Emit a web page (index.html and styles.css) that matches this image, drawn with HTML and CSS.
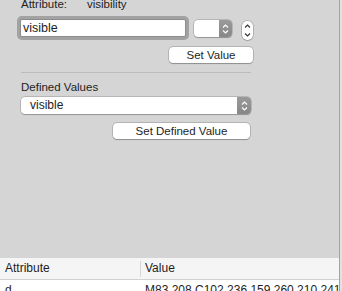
FILE: index.html
```html
<!DOCTYPE html>
<html lang="en">
<head>
    <meta charset="UTF-8">
    <meta name="viewport" content="width=device-width, initial-scale=1.0">
    <title>Attribute Inspector</title>
    <link rel="stylesheet" href="styles.css">
</head>
<body>
    <div class="window">
        <div class="inspector">
            <div class="attr-row">
                <span class="attr-label">Attribute:</span>
                <span class="attr-name">visibility</span>
            </div>

            <div class="value-row">
                <div class="text-field">visible</div>
                <div class="popup popup-small">
                    <span class="popup-value"></span>
                    <span class="popup-arrow">
                        <svg width="7" height="10" viewBox="0 0 7 10"><path d="M1 3.5 L3.5 1 L6 3.5 M1 6.5 L3.5 9 L6 6.5" fill="none" stroke="#fff" stroke-width="1.2"/></svg>
                    </span>
                </div>
                <div class="stepper">
                    <svg width="7" height="15" viewBox="0 0 7 15"><path d="M1 4.5 L3.5 2 L6 4.5 M1 10.5 L3.5 13 L6 10.5" fill="none" stroke="#333" stroke-width="1.1"/></svg>
                </div>
            </div>

            <div class="button-row set-value-row">
                <button class="push-button set-value">Set Value</button>
            </div>

            <div class="separator"></div>

            <div class="section-label">Defined Values</div>
            <div class="popup popup-wide">
                <span class="popup-value">visible</span>
                <span class="popup-arrow">
                    <svg width="7" height="10" viewBox="0 0 7 10"><path d="M1 3.5 L3.5 1 L6 3.5 M1 6.5 L3.5 9 L6 6.5" fill="none" stroke="#fff" stroke-width="1.2"/></svg>
                </span>
            </div>

            <div class="button-row set-defined-row">
                <button class="push-button set-defined">Set Defined Value</button>
            </div>
        </div>

        <div class="table-area">
            <table class="attr-table">
                <thead>
                    <tr>
                        <th class="col-attr">Attribute</th>
                        <th class="col-value">Value</th>
                    </tr>
                </thead>
                <tbody>
                    <tr>
                        <td class="col-attr">d</td>
                        <td class="col-value">M83 208 C102 236 159 260 210 241 C255 224 271 180</td>
                    </tr>
                </tbody>
            </table>
        </div>
    </div>
</body>
</html>
```

FILE: styles.css
```css
html {
    background: #e2e2e2;
}

body {
    margin: 0;
    padding: 0;
    font-family: 'Liberation Sans', Arial, sans-serif;
    font-size: 11.5px;
    color: #1e1e1e;
    overflow: hidden;
}

.window {
    width: 339px;
    height: 291px;
    background: #d5d5d5;
    border-right: 1px solid #a3a3a3;
    display: flex;
    flex-direction: column;
    overflow: hidden;
}

.inspector {
    padding-left: 21px;
    width: 232px;
}

.attr-row {
    margin-top: -3px;
    height: 14px;
    line-height: 14px;
    display: flex;
}

.attr-label {
    width: 66px;
}

.value-row {
    margin-top: 8px;
    display: flex;
    align-items: flex-start;
}

.text-field {
    width: 164px;
    height: 16px;
    line-height: 17px;
    padding-left: 2px;
    font-size: 12.5px;
    background: #fff;
    border: 1px solid #8d8d8d;
    border-radius: 2px;
    box-shadow: 0 0 0 3px #a2a2a2;
    box-sizing: content-box;
    margin-left: -1px;
}

.popup {
    display: flex;
    height: 17px;
    box-sizing: border-box;
    background: #fff;
    border-radius: 4px;
    box-shadow: 0 0 0 0.5px rgba(0, 0, 0, 0.25), 0 0.5px 1px rgba(0, 0, 0, 0.2);
    overflow: hidden;
}

.popup-value {
    flex: 1;
    line-height: 17px;
    padding-left: 9px;
    font-size: 12px;
}

.popup-arrow {
    width: 14px;
    display: flex;
    align-items: center;
    justify-content: center;
    background: linear-gradient(#9a9a9a, #878787);
}

.popup-small {
    width: 38px;
    margin-left: 8px;
    margin-top: 1px;
}

.popup-small .popup-arrow {
    width: 13px;
}

.popup-wide {
    width: 230px;
    margin-top: 3px;
}

.stepper {
    width: 11px;
    height: 19px;
    margin-left: 10px;
    margin-top: 2px;
    box-sizing: border-box;
    background: #fff;
    border-radius: 5px;
    box-shadow: 0 0 0 0.5px rgba(0, 0, 0, 0.3), 0 0.5px 1px rgba(0, 0, 0, 0.2);
    display: flex;
    align-items: center;
    justify-content: center;
}

.button-row {
    display: flex;
    justify-content: flex-end;
}

.set-value-row {
    margin-top: 7px;
}

.set-defined-row {
    margin-top: 9px;
    width: 229px;
}

.push-button {
    height: 16px;
    padding: 0;
    font-family: inherit;
    font-size: 11.5px;
    line-height: 16px;
    color: #1e1e1e;
    background: #fff;
    border: none;
    border-radius: 4px;
    box-shadow: 0 0 0 0.5px rgba(0, 0, 0, 0.28), 0 0.5px 1px rgba(0, 0, 0, 0.22);
}

.set-value {
    width: 84px;
}

.set-defined {
    width: 137px;
}

.separator {
    margin-top: 9px;
    width: 230px;
    height: 1px;
    background: #bcbcbc;
}

.section-label {
    margin-top: 7px;
    height: 14px;
    line-height: 14px;
}

.table-area {
    margin-top: auto;
    height: 33px;
    overflow: hidden;
    background: #fff;
}

.attr-table {
    width: 100%;
    border-collapse: collapse;
    table-layout: fixed;
    font-size: 12px;
}

.attr-table th {
    height: 21px;
    padding: 0 0 0 5px;
    text-align: left;
    font-weight: normal;
    background: #f5f5f5;
    border-bottom: 1px solid #d2d2d2;
    line-height: 21px;
}

.attr-table th.col-attr {
    width: 135px;
}

.attr-table th.col-value {
    padding-left: 5px;
    background: #f5f5f5 linear-gradient(#d6d6d6, #d6d6d6) left center / 1px 16px no-repeat;
}

.attr-table td {
    padding: 0 0 0 5px;
    line-height: 21px;
    white-space: nowrap;
    overflow: hidden;
}
```
